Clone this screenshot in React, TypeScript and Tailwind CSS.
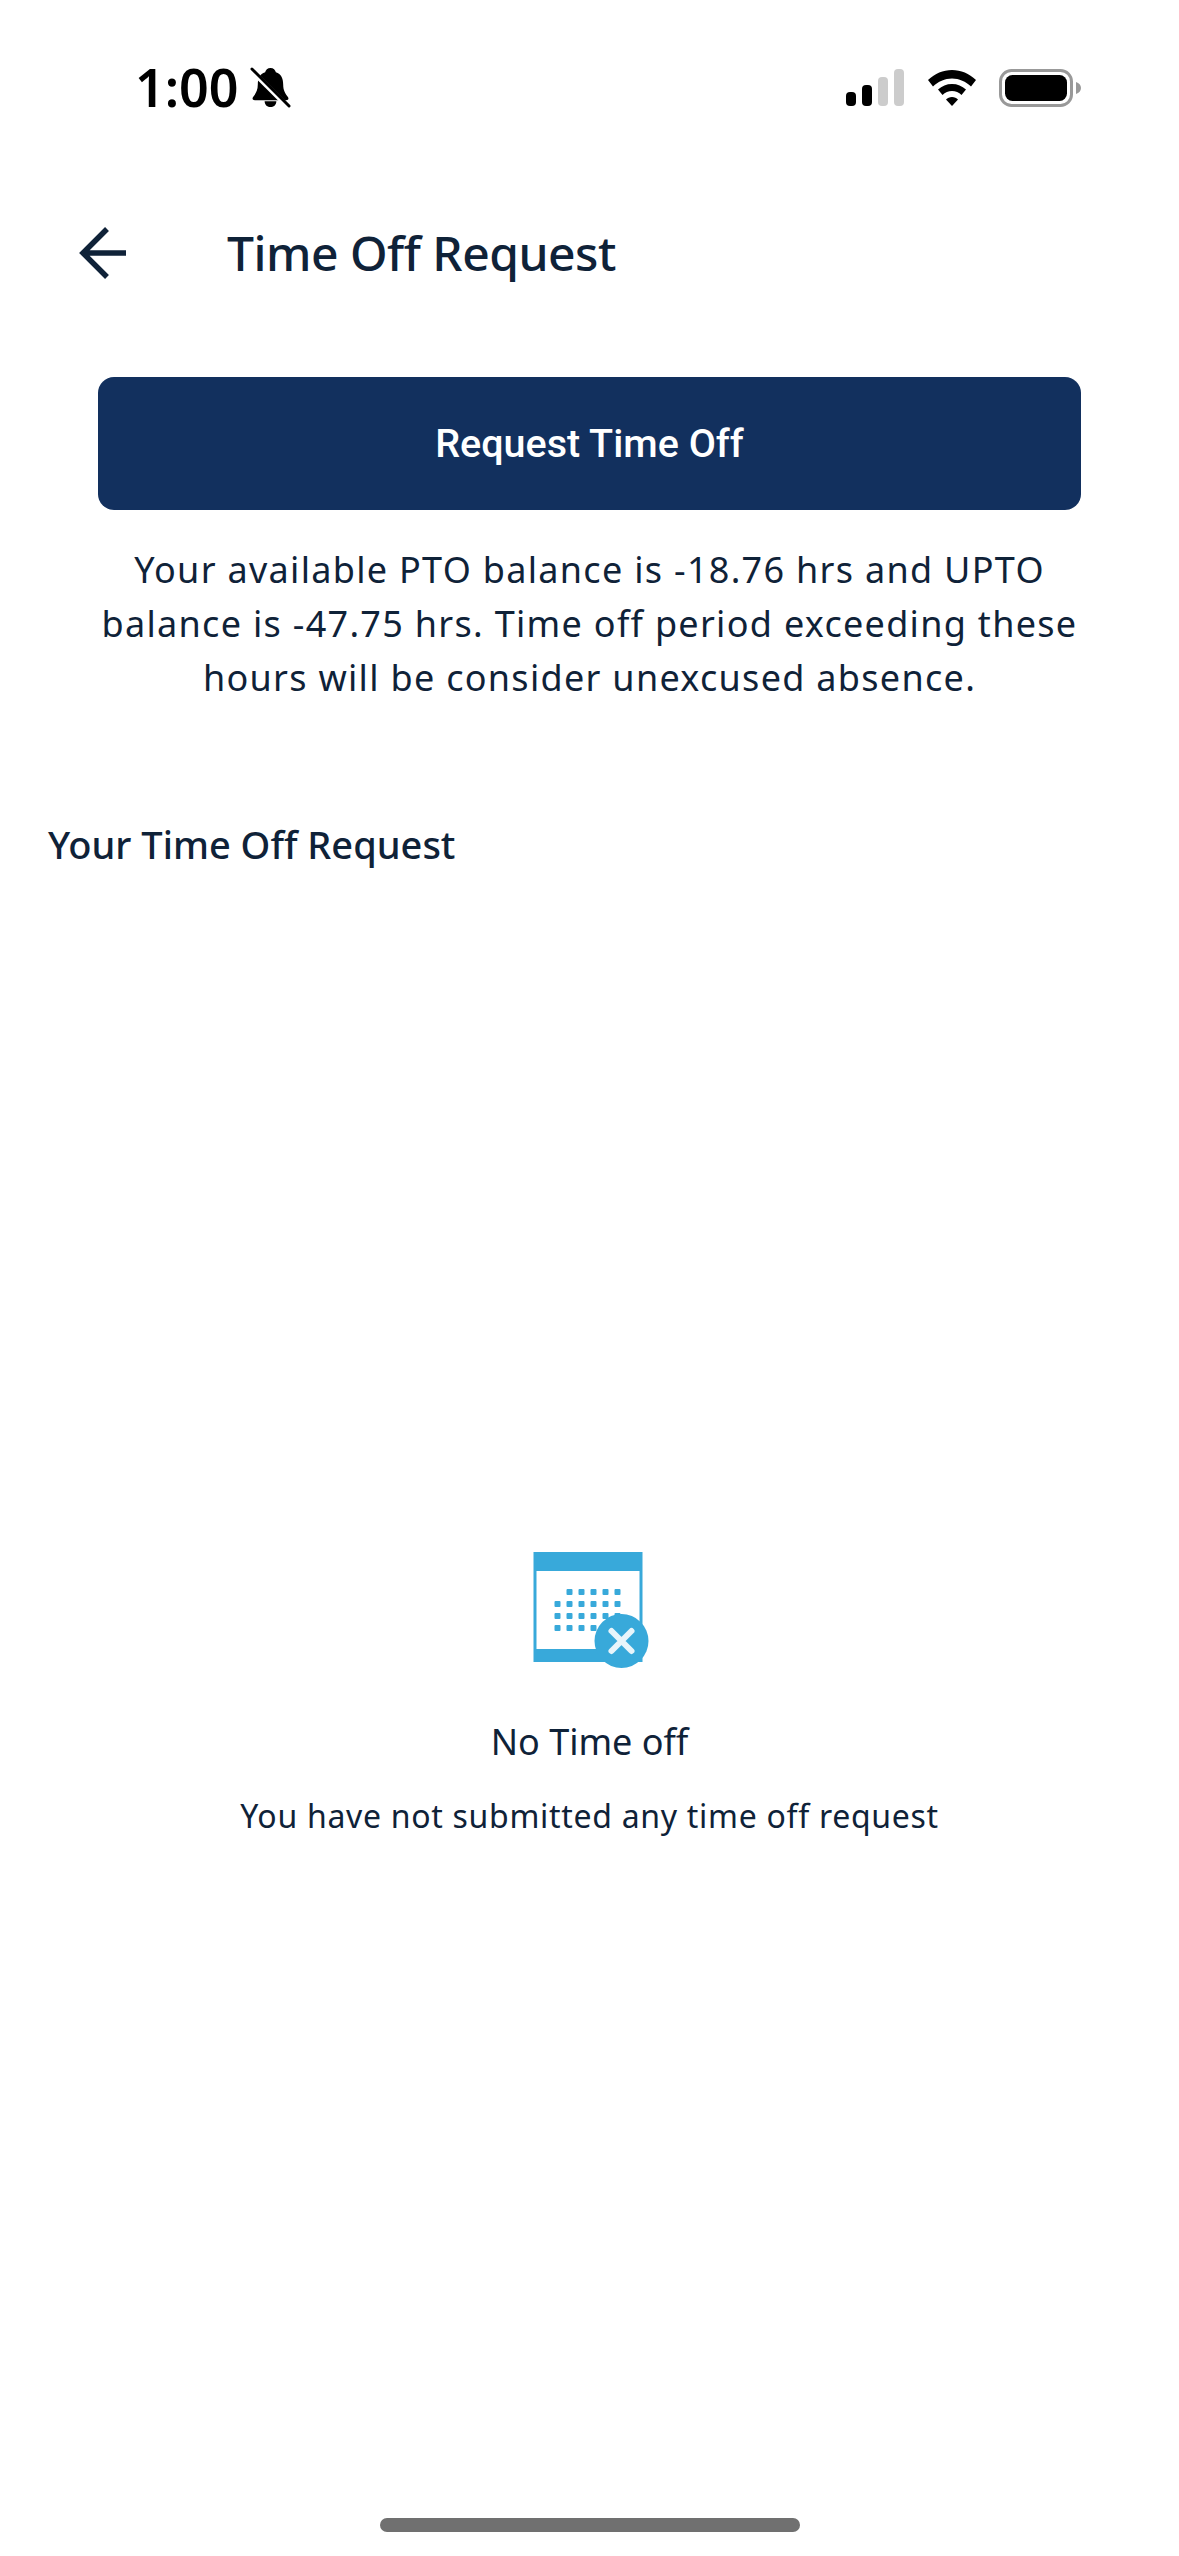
import React from 'react';

const BellOff = () => (
  <svg width="41" height="43" viewBox="0 0 42 44" className="ml-[11px]">
    <path d="M21 2c3 0 5 2 5.500 4.500C32 8 34 13 34 19c0 6 2 9 5 13 1 2 0 3-2 3H5c-2 0-3-1-2-3 3-4 5-7 5-13 0-6 2-11 7.500-12.500C16 4 18 2 21 2z" fill="#000" />
    <path d="M15 36h12c0 4-3 6-6 6s-6-2-6-6z" fill="#000" />
    <path d="M2 5l38 38" stroke="#fff" strokeWidth="5" />
    <path d="M2 3l38 38" stroke="#000" strokeWidth="3" strokeLinecap="round" />
  </svg>
);

const StatusIcons = () => (
  <div className="flex items-center">
    <svg width="58" height="38" viewBox="0 0 58 38">
      <rect x="0" y="23" width="10" height="14" rx="4" fill="#000" />
      <rect x="16" y="16" width="10" height="21" rx="4" fill="#000" />
      <rect x="32" y="8" width="10" height="29" rx="4" fill="#ccc" />
      <rect x="48" y="0" width="10" height="37" rx="4" fill="#ccc" />
    </svg>
    <svg width="50" height="38" viewBox="0 0 50 38" className="ml-[23px]">
      <path d="M25 1c9 0 17 3.500 24 10l-5 6.500c-5-5-12-8-19-8s-14 3-19 8L1 11C8 4.500 16 1 25 1z" fill="#000" />
      <path d="M25 15c5.500 0 10 2 14 5.500l-4.500 5.500c-2.500-2.500-6-4-9.500-4s-7 1.500-9.500 4L11 20.500C15 17 19.500 15 25 15z" fill="#000" />
      <path d="M25 28c2.500 0 4.500 1 6 2.500L25 37l-6-6.500C20.500 29 22.500 28 25 28z" fill="#000" />
    </svg>
    <svg width="82" height="38" viewBox="0 0 82 38" className="ml-[22px]">
      <rect x="1.500" y="1.500" width="71" height="35" rx="11" fill="none" stroke="#999" strokeWidth="3" />
      <rect x="6" y="6" width="62" height="26" rx="7.500" fill="#000" />
      <path d="M77 13c3 1 5 3 5 6s-2 5-5 6z" fill="#999" />
    </svg>
  </div>
);

const CalendarX = () => (
  <svg width="120" height="120" viewBox="0 0 120 120">
    <rect x="3.500" y="1" width="109" height="110" fill="#38a9da" />
    <rect x="6.500" y="20" width="103" height="78" fill="#fff" />
    {[
      [1, 2, 3, 4, 5],
      [0, 1, 2, 3, 4, 5],
      [0, 1, 2, 3, 4, 5],
      [0, 1, 2, 3, 4, 5],
    ].map((row, y) =>
      row.map((i) => (
        <rect key={`${i}-${y}`} x={24.5 + i * 12} y={38 + y * 12} width="6" height="6" rx="1" fill="#38a9da" />
      )),
    )}
    <circle cx="91.500" cy="90" r="27" fill="#38a9da" />
    <path d="M81.500 80l20 20M101.500 80l-20 20" stroke="#e8f5fb" strokeWidth="6" strokeLinecap="round" />
  </svg>
);

export default function App() {
  return (
    <div className="w-[1179px] h-[2556px] bg-white flex flex-col text-[#0f2238] font-['Noto_Sans',sans-serif]">
      {/* status bar */}
      <div className="h-[93px] pt-[69px] pl-[135px] pr-[98px] flex items-start justify-between">
        <div className="flex items-center h-[50px] -mt-[7px]">
          <span className="text-[52px] leading-none font-semibold text-black">1:00</span>
          <BellOff />
        </div>
        <StatusIcons />
      </div>

      {/* header */}
      <div className="mt-[124px] h-[72px] flex items-center pl-[76px]">
        <svg width="52" height="56" viewBox="0 0 52 56" fill="none" stroke="#0f2238" strokeWidth="5.500">
          <path d="M7 28h43M31 4L7 28l24 24" />
        </svg>
        <span className="ml-[99px] text-[48px] leading-none font-medium tracking-[-0.5px]">Time Off Request</span>
      </div>

      {/* request button and balance */}
      <div className="mt-[88px] px-[98px]">
        <button className="w-full h-[133px] rounded-[16px] bg-[#12305e] text-white text-[39.5px] font-['Roboto',sans-serif] font-medium">
          Request Time Off
        </button>
        <p className="mt-[33px] -mx-[10px] text-center text-[36px] leading-[54px] tracking-[1.3px]">
          Your available PTO balance is -18.76 hrs and UPTO balance is -47.75 hrs. Time off period exceeding these hours will be consider unexcused absence.
        </p>
      </div>

      <h2 className="mt-[112px] pl-[48px] text-[38px] leading-[54px] font-medium">Your Time Off Request</h2>

      {/* empty state */}
      <div className="mt-[680px] flex flex-col items-center">
        <CalendarX />
        <div className="mt-[46px] text-[36px] leading-[50px] font-[450]">No Time off</div>
        <p className="mt-[27px] text-[32px] leading-[44px] tracking-[0.7px]">You have not submitted any time off request</p>
      </div>

      {/* home indicator */}
      <div className="mt-auto mb-[24px] self-center w-[420px] h-[14px] rounded-full bg-[#707070]" />
    </div>
  );
}
